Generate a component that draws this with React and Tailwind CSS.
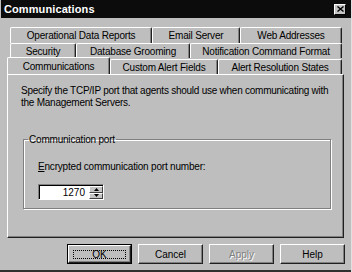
import React from 'react';

const font = { fontFamily: '"Liberation Sans", Arial, sans-serif' };

const Tab = ({ label, className = '' }) => (
  <div
    className={`h-full flex items-center justify-center rounded-t-[2px] border-t border-l border-white border-r border-r-[#202020] shadow-[inset_-1px_0_#808080] text-[10px] tracking-[-0.2px] text-black ${className}`}
  >
    {label}
  </div>
);

const Button = ({ label, isDefault = false, disabled = false }) => (
  <div
    className={`w-[65px] h-[20px] flex items-center justify-center ${isDefault ? 'border border-black' : ''}`}
  >
    <div className="w-full h-full flex items-center justify-center border-t border-l border-white border-r border-b border-r-[#202020] border-b-[#202020] shadow-[inset_-1px_-1px_#808080]">
      {isDefault ? (
        <div className="w-[calc(100%-8px)] h-[calc(100%-7px)] border border-dotted border-black flex items-center justify-center text-[10px]">
          {label}
        </div>
      ) : (
        <span
          className={`text-[10px] ${disabled ? 'text-[#808080] [text-shadow:1px_1px_#ffffff]' : 'text-black'}`}
        >
          {label}
        </span>
      )}
    </div>
  </div>
);

export default function App() {
  return (
    <div className="w-[352px] h-[272px] bg-[#bebebe] flex flex-col overflow-hidden border-r border-r-[#e0e0e0]" style={font}>
      {/* title bar */}
      <div className="h-[18px] ml-[1px] bg-[#0c0c0c] flex items-center justify-between pl-[3px] pr-[5px]">
        <span className="text-white font-bold text-[11px] tracking-[0.1px]">Communications</span>
        <div className="w-[12px] h-[11px] bg-[#c4c4c4] border-t border-l border-white border-r border-b border-r-black border-b-black flex items-center justify-center">
          <svg width="7" height="6" viewBox="0 0 7 6">
            <path d="M0.5 0.5 L6.5 5.5 M6.5 0.5 L0.5 5.5" stroke="#000" strokeWidth="1.4" />
          </svg>
        </div>
      </div>

      <div className="flex-1 flex flex-col pt-[9px]">
        {/* tab rows */}
        <div className="ml-[10px] w-[332px] h-[16px] flex">
          <Tab label="Operational Data Reports" className="w-[142px]" />
          <Tab label="Email Server" className="w-[88px]" />
          <Tab label="Web Addresses" className="flex-1" />
        </div>
        <div className="ml-[10px] w-[332px] h-[15px] flex">
          <Tab label="Security" className="w-[66px]" />
          <Tab label="Database Grooming" className="w-[114px]" />
          <Tab label="Notification Command Format" className="flex-1" />
        </div>
        <div className="ml-[7px] w-[336px] h-[16px] flex items-end">
          <Tab label="Communications" className="w-[103px] !h-[17px] bg-[#bebebe] relative z-10" />
          <div className="ml-0 flex h-[15px] flex-1">
            <Tab label="Custom Alert Fields" className="w-[108px]" />
            <Tab label="Alert Resolution States" className="flex-1 mr-[1px]" />
          </div>
        </div>

        {/* panel */}
        <div className="ml-[7px] w-[337px] h-[164px] border-l border-t border-white border-r border-b border-r-[#202020] border-b-[#202020] shadow-[inset_-1px_-1px_#808080] flex flex-col">
          <p className="mt-[10px] ml-[13px] text-[10px] leading-[12px] tracking-[-0.25px] text-black whitespace-nowrap">
            Specify the TCP/IP port that agents should use when communicating with
            <br />
            the Management Servers.
          </p>
          <fieldset className="mt-[25px] ml-[15px] w-[308px] h-[75px] border border-[#808080] shadow-[1px_1px_#ffffff,inset_1px_1px_#ffffff] px-[14px]">
            <legend className="ml-[-10px] px-[1px] text-[10px] tracking-[-0.2px] text-black leading-[11px]">Communication port</legend>
            <div className="mt-[14px] text-[10px] tracking-[-0.2px] text-black">
              <span className="underline">E</span>ncrypted communication port number:
            </div>
            <div className="mt-[10px] flex w-[66px] h-[16px] border-t border-l border-[#808080] border-r border-b border-r-white border-b-white">
              <div className="flex-1 bg-white border-t border-l border-black flex items-center justify-end pr-[4px] text-[10px] text-black">
                1270
              </div>
              <div className="w-[14px] flex flex-col border-t border-black">
                <div className="flex-1 flex items-center justify-center bg-[#c4c4c4] border-t border-l border-white border-r border-b border-r-[#404040] border-b-[#404040]">
                  <svg width="5" height="3" viewBox="0 0 5 3"><path d="M2.5 0 L5 3 L0 3 Z" fill="#000" /></svg>
                </div>
                <div className="flex-1 flex items-center justify-center bg-[#c4c4c4] border-t border-l border-white border-r border-b border-r-[#404040] border-b-[#404040]">
                  <svg width="5" height="3" viewBox="0 0 5 3"><path d="M0 0 L5 0 L2.5 3 Z" fill="#000" /></svg>
                </div>
              </div>
            </div>
          </fieldset>
        </div>

        {/* buttons */}
        <div className="mt-[6px] ml-[67px] flex gap-[6px]">
          <Button label="OK" isDefault />
          <Button label="Cancel" />
          <Button label="Apply" disabled />
          <Button label="Help" />
        </div>
      </div>
      <div className="h-[2px] bg-[#303030] mt-auto" />
    </div>
  );
}
